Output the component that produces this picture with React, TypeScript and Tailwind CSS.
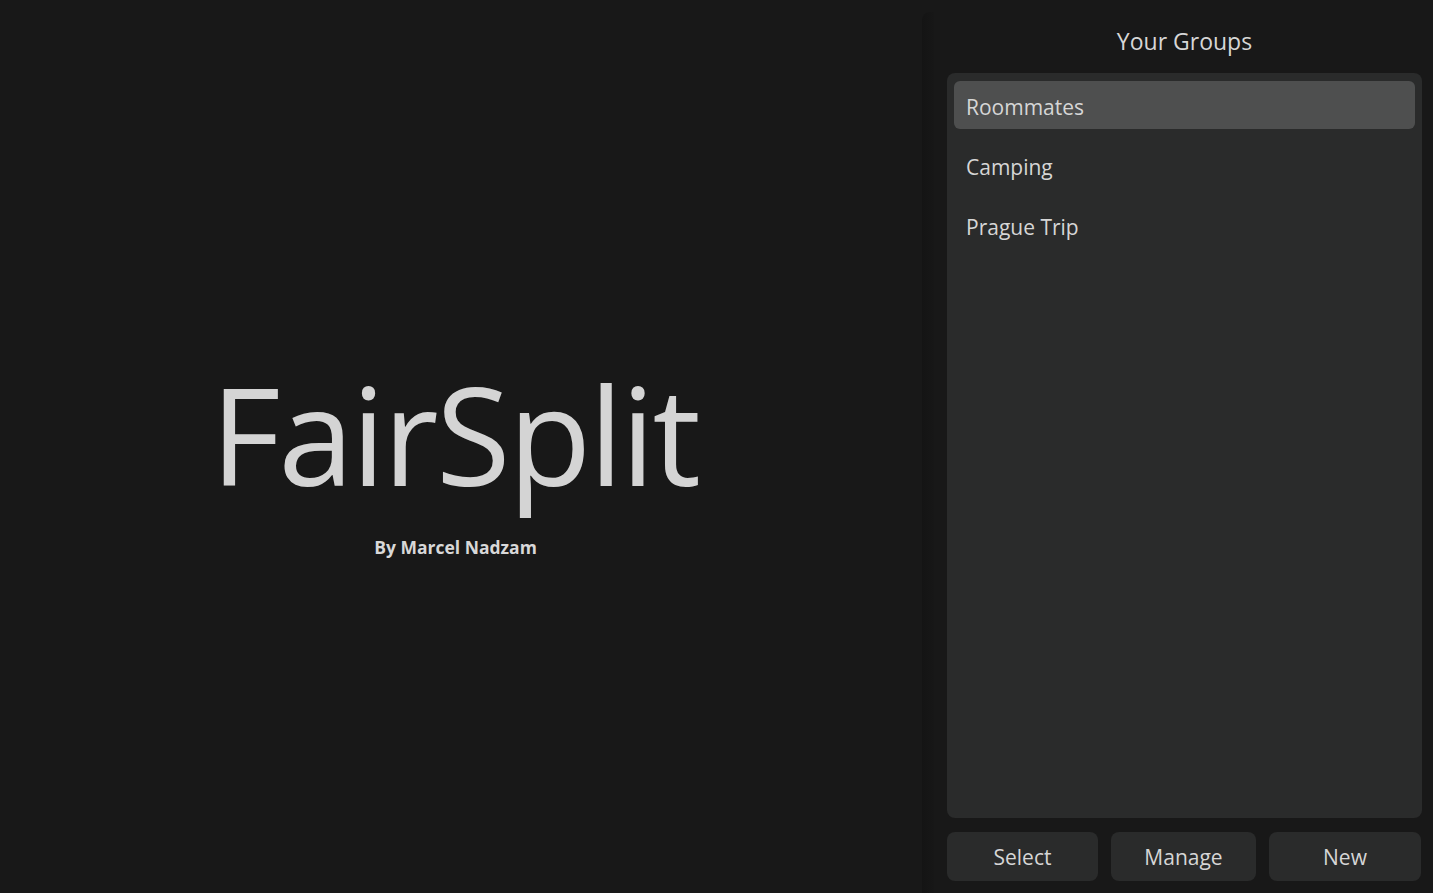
const groups = ["Roommates", "Camping", "Prague Trip"];

export default function App() {
  const selected = 0;

  return (
    <div
      className="flex h-[893px] w-full overflow-hidden bg-[#181818] text-[#d6d6d6]"
      style={{ fontFamily: '"Open Sans", "Noto Sans", sans-serif' }}
    >
      {/* Branding */}
      <div className="flex w-[922px] shrink-0 flex-col items-center justify-center pr-[8px] pt-[34px]">
        <h1 className="mr-[5px] text-[136px] font-normal leading-none tracking-[-2.5px] text-[#d4d4d4]">
          FairSplit
        </h1>
        <p className="mt-[32px] pr-[3px] text-[17.5px] font-bold text-[#d8d8d8]">By Marcel Nadzam</p>
      </div>

      {/* Divider shadow */}
      <div className="mt-[12px] w-[12px] shrink-0 rounded-tl-[8px] bg-gradient-to-r from-[#141414] to-[#171717]" />

      {/* Groups panel */}
      <div className="flex flex-1 flex-col pl-[13px] pr-[11px] pb-[12px]">
        <h2 className="pt-[24px] pb-[15px] text-center text-[23px] leading-[34px]">Your Groups</h2>

        <div className="flex flex-1 flex-col gap-[12px] rounded-[8px] bg-[#2a2b2b] p-[7px] pt-[8px]">
          {groups.map((g, i) => (
            <div
              key={g}
              className={`flex h-[48px] items-center rounded-[6px] px-[12px] pt-[6px] text-[21px] ${
                i === selected ? "bg-[#4e4f4f]" : ""
              }`}
            >
              {g}
            </div>
          ))}
        </div>

        <div className="mt-[14px] grid grid-cols-[151px_145px_152px] gap-[13px]">
          {["Select", "Manage", "New"].map((b) => (
            <button
              key={b}
              className="h-[49px] rounded-[8px] bg-[#2a2b2b] pt-[3px] text-[21px] text-[#d6d6d6]"
            >
              {b}
            </button>
          ))}
        </div>
      </div>
    </div>
  );
}
